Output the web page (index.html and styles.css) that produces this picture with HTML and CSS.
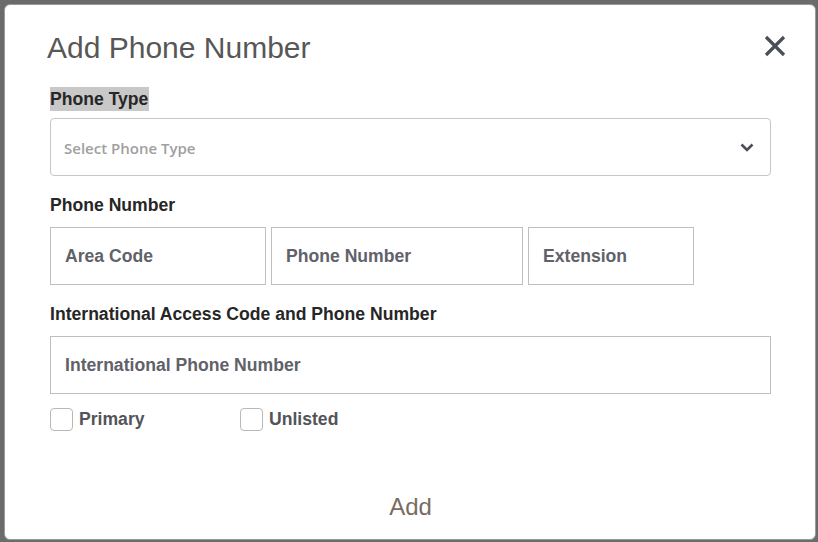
FILE: index.html
```html
<!DOCTYPE html>
<html lang="en">
<head>
  <meta charset="UTF-8">
  <title>Add Phone Number</title>
  <link rel="stylesheet" href="styles.css">
</head>
<body>
  <div class="modal">
    <div class="modal-header">
      <h2 class="modal-title">Add Phone Number</h2>
      <button class="close-button" title="Close">
        <svg width="22" height="22" viewBox="0 0 22 22">
          <path d="M2 2 L20 20 M20 2 L2 20" stroke="#4a4f57" stroke-width="3.2" fill="none"/>
        </svg>
      </button>
    </div>

    <div class="modal-body">
      <div class="field">
        <label class="field-label selected">Phone Type</label>
        <div class="select-box">
          <span class="select-text">Select Phone Type</span>
          <svg class="chevron" width="14" height="9" viewBox="0 0 14 9">
            <path d="M1.5 1.5 L7 7 L12.5 1.5" stroke="#4a4f57" stroke-width="2.6" fill="none"/>
          </svg>
        </div>
      </div>

      <div class="field">
        <label class="field-label">Phone Number</label>
        <div class="phone-row">
          <input class="text-input area" type="text" placeholder="Area Code">
          <input class="text-input number" type="text" placeholder="Phone Number">
          <input class="text-input ext" type="text" placeholder="Extension">
        </div>
      </div>

      <div class="field">
        <label class="field-label">International Access Code and Phone Number</label>
        <input class="text-input full" type="text" placeholder="International Phone Number">
      </div>

      <div class="check-row">
        <label class="check-item"><input type="checkbox" class="check-box"> Primary</label>
        <label class="check-item"><input type="checkbox" class="check-box"> Unlisted</label>
      </div>
    </div>

    <div class="modal-footer">
      <button class="add-button">Add</button>
    </div>
  </div>
</body>
</html>
```

FILE: styles.css
```css
* {
  box-sizing: border-box;
}

body {
  margin: 0;
  padding: 0;
  height: 542px;
  overflow: hidden;
  background: #6b6b6b;
  font-family: 'Liberation Sans', Arial, sans-serif;
}

.modal {
  margin: 4px 0 0 4px;
  width: 812px;
  height: 536px;
  background: white;
  border: 1px solid #9a9a9a;
  border-radius: 6px;
  padding: 0 44px 0 45px;
  display: flex;
  flex-direction: column;
}

.modal-header {
  display: flex;
  justify-content: space-between;
  align-items: flex-start;
  padding-top: 26px;
  margin-left: -3px;
  margin-right: -15px;
}

.modal-title {
  margin: 0;
  font-size: 30px;
  line-height: 34px;
  font-weight: normal;
  color: #575757;
}

.close-button {
  background: none;
  border: none;
  padding: 0;
  margin-top: 4px;
  width: 22px;
  height: 22px;
  cursor: pointer;
  display: flex;
}

.modal-body {
  margin-top: 22px;
}

.field + .field {
  margin-top: 17px;
}

.field-label {
  display: table;
  font-size: 17.6px;
  line-height: 24px;
  font-weight: bold;
  color: #262626;
  margin-bottom: 10px;
}

.field-label.selected {
  background: #c8c8c8;
  padding-right: 1px;
  margin-bottom: 7px;
}

.select-box {
  height: 58px;
  border: 1px solid #c6c6c6;
  border-radius: 4px;
  display: flex;
  align-items: center;
  justify-content: space-between;
  padding: 0 16px 0 13px;
}

.select-text {
  font-family: 'Open Sans', sans-serif;
  font-size: 15px;
  font-weight: 600;
  color: #a0a0a0;
  padding-top: 2px;
}

.phone-row {
  display: flex;
  gap: 5px;
}

.text-input {
  height: 58px;
  border: 1px solid #bfbfbf;
  border-radius: 0;
  padding: 0 14px;
  font-family: 'Liberation Sans', Arial, sans-serif;
  font-size: 17.6px;
  font-weight: bold;
  color: #333;
  outline: none;
}

.text-input::placeholder {
  color: #5f6269;
  opacity: 1;
}

.text-input.area {
  width: 216px;
}

.text-input.number {
  width: 252px;
}

.text-input.ext {
  width: 166px;
}

.text-input.full {
  width: 100%;
  display: block;
}

.check-row {
  display: flex;
  margin-top: 14px;
}

.check-item {
  width: 190px;
  display: flex;
  align-items: center;
  gap: 6px;
  font-size: 17.6px;
  font-weight: bold;
  color: #525459;
}

.check-box {
  appearance: none;
  -webkit-appearance: none;
  margin: 0;
  width: 23px;
  height: 23px;
  border: 1px solid #b8b8b8;
  border-radius: 4px;
  background: white;
}

.modal-footer {
  margin-top: auto;
  padding-bottom: 18px;
  display: flex;
  justify-content: center;
}

.add-button {
  background: none;
  border: none;
  padding: 0;
  font-family: 'Liberation Sans', Arial, sans-serif;
  font-size: 24px;
  line-height: 28px;
  color: #786c61;
  cursor: pointer;
}
```
